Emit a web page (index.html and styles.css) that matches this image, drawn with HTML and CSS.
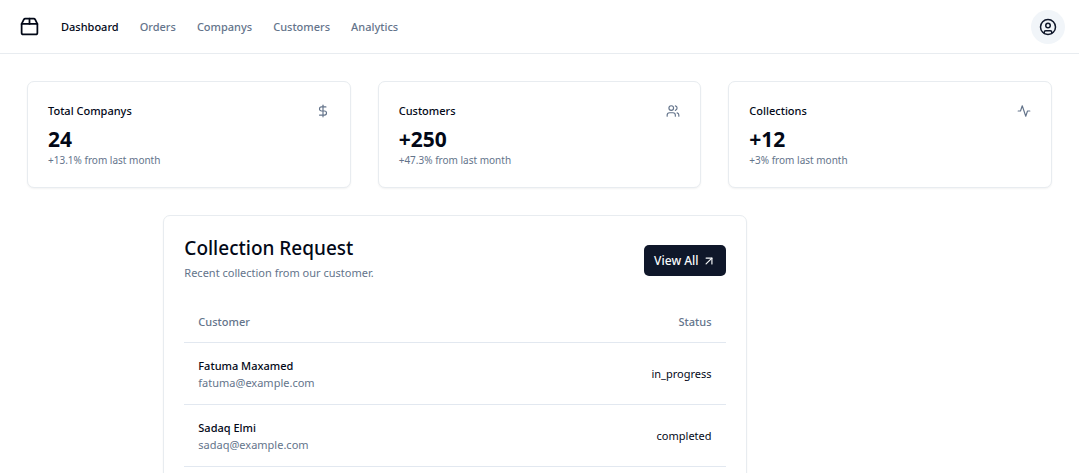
FILE: index.html
```html
<!DOCTYPE html>
<html lang="en">
<head>
<meta charset="utf-8">
<meta name="viewport" content="width=device-width, initial-scale=1">
<title>Dashboard</title>
<link rel="stylesheet" href="styles.css">
</head>
<body>
<header class="topbar">
  <nav class="nav">
    <a class="brand" href="#" aria-label="Home">
      <svg class="icon" viewBox="0 0 24 24"><path d="M3 9h18v10a2 2 0 0 1-2 2H5a2 2 0 0 1-2-2V9Z"/><path d="m3 9 2.450-4.900A2 2 0 0 1 7.240 3h9.520a2 2 0 0 1 1.800 1.100L21 9"/><path d="M12 3v6"/></svg>
    </a>
    <a class="nav-link active" href="#">Dashboard</a>
    <a class="nav-link" href="#">Orders</a>
    <a class="nav-link" href="#">Companys</a>
    <a class="nav-link" href="#">Customers</a>
    <a class="nav-link" href="#">Analytics</a>
  </nav>
  <button class="avatar" type="button" aria-label="Account">
    <svg class="icon" viewBox="0 0 24 24"><circle cx="12" cy="12" r="10"/><circle cx="12" cy="10" r="3"/><path d="M7 20.660V19a2 2 0 0 1 2-2h6a2 2 0 0 1 2 2v1.660"/></svg>
  </button>
</header>
<main class="content">
  <section class="stats">
    <article class="card stat">
      <div class="stat-head">
        <h3 class="stat-title">Total Companys</h3>
        <svg class="icon" viewBox="0 0 24 24"><path d="M12 2v20"/><path d="M17 5H9.500a3.500 3.500 0 0 0 0 7h5a3.500 3.500 0 0 1 0 7H6"/></svg>
      </div>
      <div class="stat-value">24</div>
      <p class="stat-note">+13.1% from last month</p>
    </article>
    <article class="card stat">
      <div class="stat-head">
        <h3 class="stat-title">Customers</h3>
        <svg class="icon" viewBox="0 0 24 24"><path d="M16 21v-2a4 4 0 0 0-4-4H6a4 4 0 0 0-4 4v2"/><circle cx="9" cy="7" r="4"/><path d="M22 21v-2a4 4 0 0 0-3-3.870"/><path d="M16 3.130a4 4 0 0 1 0 7.750"/></svg>
      </div>
      <div class="stat-value">+250</div>
      <p class="stat-note">+47.3% from last month</p>
    </article>
    <article class="card stat">
      <div class="stat-head">
        <h3 class="stat-title">Collections</h3>
        <svg class="icon" viewBox="0 0 24 24"><path d="M22 12h-4l-3 9L9 3l-3 9H2"/></svg>
      </div>
      <div class="stat-value">+12</div>
      <p class="stat-note">+3% from last month</p>
    </article>
  </section>
  <section class="card requests">
    <div class="requests-head">
      <div class="requests-text">
        <h2 class="requests-title">Collection Request</h2>
        <p class="requests-note">Recent collection from our customer.</p>
      </div>
      <a class="view-all" href="#">View All
        <svg class="icon" viewBox="0 0 24 24"><path d="M7 7h10v10"/><path d="M7 17 17 7"/></svg>
      </a>
    </div>
    <table class="table">
      <thead>
        <tr><th scope="col">Customer</th><th class="right" scope="col">Status</th></tr>
      </thead>
      <tbody>
        <tr>
          <td><div class="name">Fatuma Maxamed</div><div class="email">fatuma@example.com</div></td>
          <td class="right">in_progress</td>
        </tr>
        <tr>
          <td><div class="name">Sadaq Elmi</div><div class="email">sadaq@example.com</div></td>
          <td class="right">completed</td>
        </tr>
      </tbody>
    </table>
  </section>
</main>
</body>
</html>
```
FILE: styles.css
```css
* { box-sizing: border-box; }

body {
  margin: 0;
  background: #fff;
  color: #020817;
  font-family: "Noto Sans", "Open Sans", sans-serif;
  font-size: 11px;
  line-height: 17px;
}

h2, h3, p { margin: 0; }

a { color: inherit; text-decoration: none; }

.icon {
  display: block;
  flex: none;
  width: 14px;
  height: 14px;
  fill: none;
  stroke: currentColor;
  stroke-width: 2;
  stroke-linecap: round;
  stroke-linejoin: round;
}

.topbar {
  display: flex;
  align-items: center;
  justify-content: space-between;
  height: 54px;
  padding: 0 14px 0 19px;
  border-bottom: 1px solid #e8ecf0;
}

.nav {
  display: flex;
  align-items: center;
  gap: 21px;
  font-weight: 500;
}

.brand .icon { width: 21px; height: 21px; }

.nav-link { color: #64748b; }
.nav-link.active { color: #020817; }

.avatar {
  display: grid;
  place-items: center;
  width: 34px;
  height: 34px;
  padding: 0;
  border: 0;
  border-radius: 50%;
  background: #f1f5f9;
  color: #0f172a;
}

.avatar .icon { width: 18px; height: 18px; }

.content { padding: 27px; }

.stats {
  display: grid;
  grid-template-columns: repeat(3, 1fr);
  gap: 27px;
}

.card {
  border: 1px solid #e8ecf0;
  border-radius: 7px;
  background: #fff;
  box-shadow: 0 1px 2px rgba(0, 0, 0, 0.05);
}

.stat { padding: 20px; }

.stat-head {
  display: flex;
  align-items: center;
  justify-content: space-between;
  padding-bottom: 7px;
}

.stat-head .icon { color: #64748b; }

.stat-title { font-size: 11px; font-weight: 500; }

.stat-value {
  font-size: 21px;
  font-weight: 700;
  line-height: 27px;
}

.stat-note {
  color: #64748b;
  font-size: 10px;
  line-height: 14px;
}

.requests {
  width: 56.9%;
  margin: 27px 0 0 13.3%;
  padding: 20px;
}

.requests-head {
  display: flex;
  align-items: center;
  justify-content: space-between;
  padding-bottom: 16px;
}

.requests-text { padding-bottom: 4px; }

.requests-title {
  font-size: 19px;
  font-weight: 500;
  line-height: 24px;
}

.requests-note { padding-top: 4px; color: #64748b; }

.view-all {
  display: flex;
  align-items: center;
  gap: 3px;
  padding: 7px 10px;
  border-radius: 5px;
  background: #0f172a;
  color: #f8fafc;
  font-size: 12px;
  font-weight: 500;
}

.table { width: 100%; border-collapse: collapse; }

.table th {
  height: 41px;
  padding: 0 14px;
  color: #64748b;
  font-weight: 500;
  text-align: left;
}

.table td { padding: 14px 14px 13px; }

.table tr { border-bottom: 1px solid #e2e8f0; }

.table .right { text-align: right; }

.name { font-weight: 500; }
.email { color: #64748b; }
```
